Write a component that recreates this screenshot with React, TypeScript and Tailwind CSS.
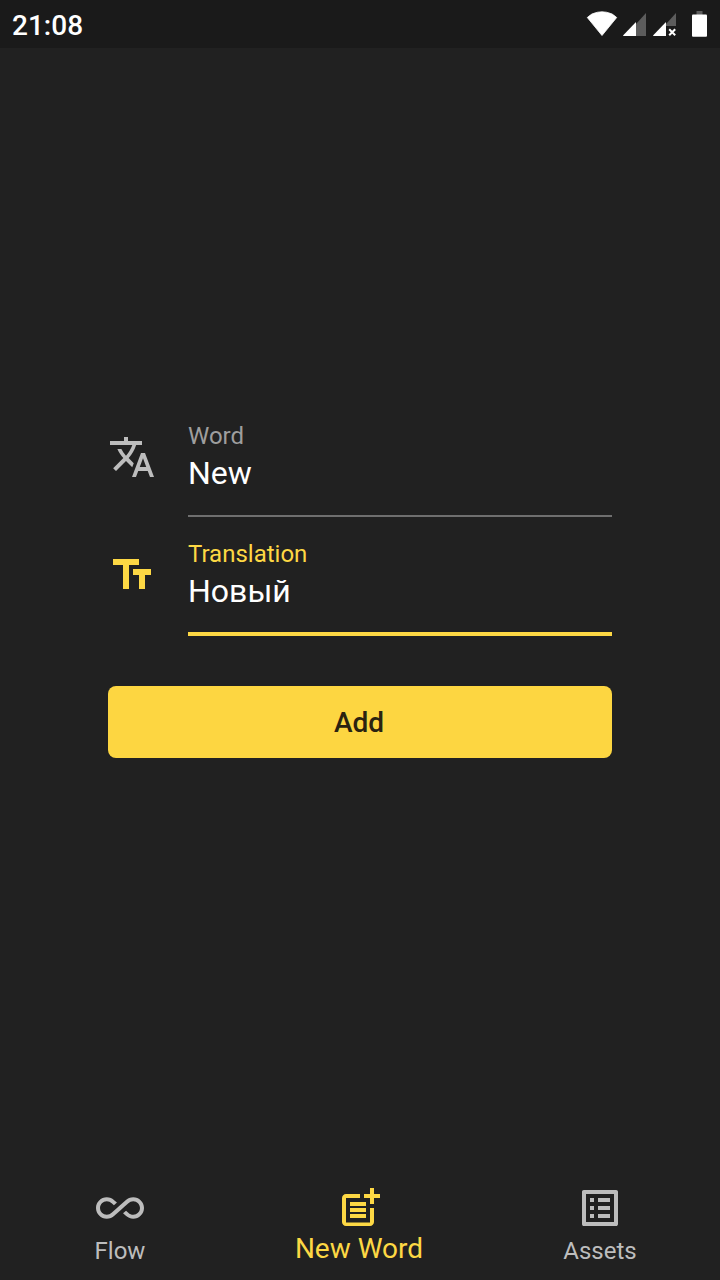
import type { ReactNode } from "react";

const icons = {
  translate:
    "M12.87 15.07l-2.54-2.51.03-.03c1.74-1.94 2.98-4.17 3.71-6.53H17V4h-7V2H8v2H1v1.99h11.17C11.5 7.92 10.44 9.75 9 11.35 8.07 10.32 7.3 9.19 6.69 8h-2c.73 1.63 1.73 3.17 2.98 4.56l-5.09 5.02L4 19l5-5 3.11 3.11.76-2.04zM18.5 10h-2L12 22h2l1.12-3h4.75L21 22h2l-4.5-12zm-2.62 7l1.62-4.33L19.12 17h-3.24z",
  textFields: "M2.5 4v3h5v12h3V7h5V4h-13zm19 5h-9v3h3v7h3v-7h3V9z",
  infinite:
    "M18.6 6.62c-1.44 0-2.8.56-3.77 1.53L12 10.66 10.48 12h.01L7.8 14.39c-.64.64-1.49.99-2.4.99-1.87 0-3.39-1.51-3.39-3.38S3.53 8.62 5.4 8.62c.91 0 1.76.35 2.44 1.03l1.13 1 1.51-1.34L9.22 8.2C8.2 7.18 6.84 6.62 5.4 6.62 2.42 6.62 0 9.04 0 12s2.42 5.38 5.4 5.38c1.44 0 2.8-.56 3.77-1.53l2.83-2.5.01.01L13.52 12h-.01l2.69-2.39c.64-.64 1.49-.99 2.4-.99 1.87 0 3.39 1.51 3.39 3.38s-1.52 3.38-3.39 3.38c-.9 0-1.76-.35-2.44-1.03l-1.14-1.01-1.51 1.34 1.27 1.12c1.02 1.01 2.37 1.57 3.82 1.57 2.98 0 5.4-2.41 5.4-5.38s-2.42-5.37-5.4-5.37z",
  postAdd:
    "M17 19.22H5V7h7V5H5c-1.1 0-2 .9-2 2v12c0 1.1.9 2 2 2h12c1.1 0 2-.9 2-2v-7h-2v7.22zM19 2h-2v3h-3v2h3v3h2V7h3V5h-3V2zM7 9h8v2H7zM7 12h8v2H7zM7 15h8v2H7z",
  listAlt:
    "M19 5v14H5V5h14m1.1-2H3.9c-.5 0-.9.4-.9.9v16.2c0 .4.4.9.9.9h16.2c.4 0 .9-.5.9-.9V3.9c0-.5-.5-.9-.9-.9zM11 7h6v2h-6V7zm0 4h6v2h-6v-2zm0 4h6v2h-6zM7 7h2v2H7zm0 4h2v2H7zm0 4h2v2H7z",
};

function Icon({ path }: { path: string }) {
  return (
    <svg viewBox="0 0 24 24" className="size-12 shrink-0" fill="currentColor">
      <path d={path} />
    </svg>
  );
}

function StatusBar() {
  return (
    <header className="flex h-12 shrink-0 items-center justify-between bg-[#1a1a1a] pl-3">
      <span className="pt-1 text-[28px] leading-8 font-medium text-white">21:08</span>
      <svg viewBox="0 0 140 48" className="h-12 w-[140px]" fill="#fff">
        <path d="M22 35.5 7.300 17.500C11 14 16 11.800 22 11.800s11 2.200 14.700 5.700z" stroke="#fff" strokeWidth="0.800" strokeLinejoin="round" />
        <path d="M56 24 66 13v23H56z" fill="#5c5c5c" />
        <path d="M43 35.500 56 22v14H43.500z" />
        <path d="M86 24 96 13v13H86z" fill="#5c5c5c" />
        <path d="M73 35.500 86 22v14H73.500z" />
        <path d="m89.200 29.200 6 6m0-6-6 6" stroke="#fff" strokeWidth="2" />
        <rect x="116.500" y="11" width="6" height="4" fill="#5c5c5c" />
        <rect x="112" y="14.500" width="15" height="22.300" rx="1" />
      </svg>
    </header>
  );
}

function Field({ label, value, icon, focused }: { label: string; value: string; icon: string; focused?: boolean }) {
  return (
    <div className="flex h-[118px] gap-8">
      <div className={`pt-[34px] ${focused ? "text-[#fdd844]" : "text-[#bdbdbd]"}`}>
        <Icon path={icon} />
      </div>
      <div className={`flex flex-1 flex-col pt-[23px] ${focused ? "h-[119px] border-b-4 border-[#fdd844]" : "h-[118px] border-b-2 border-[#6f6f6f]"}`}>
        <span className={`text-2xl leading-7 ${focused ? "text-[#fdd844]" : "text-[#9e9e9e]"}`}>{label}</span>
        <span className="mt-1 text-[32px] leading-[38px] text-white">{value}</span>
      </div>
    </div>
  );
}

function NavItem({ path, active, children }: { path: string; active?: boolean; children: ReactNode }) {
  return (
    <button className={`flex flex-1 flex-col items-center pt-4 ${active ? "text-[#fdd844]" : "text-[#bdbdbd]"}`}>
      <Icon path={path} />
      <span className={active ? "pt-px pr-0.5 text-[28px] leading-8" : "pt-[5px] text-2xl leading-7"}>{children}</span>
    </button>
  );
}

export default function App() {
  return (
    <div className="flex h-[1280px] w-[720px] flex-col bg-[#212121] font-['Roboto',sans-serif]">
      <StatusBar />
      <main className="flex flex-1 flex-col px-[108px] pt-[351px]">
        <Field label="Word" value="New" icon={icons.translate} />
        <Field label="Translation" value="Новый" icon={icons.textFields} focused />
        <button className="mt-[51px] h-[72px] rounded-lg bg-[#fdd641] pt-0.5 pr-0.5 text-[28px] leading-8 font-medium text-[#2b2310]">Add</button>
      </main>
      <nav className="flex h-28 shrink-0">
        <NavItem path={icons.infinite}>Flow</NavItem>
        <NavItem path={icons.postAdd} active>New Word</NavItem>
        <NavItem path={icons.listAlt}>Assets</NavItem>
      </nav>
    </div>
  );
}
